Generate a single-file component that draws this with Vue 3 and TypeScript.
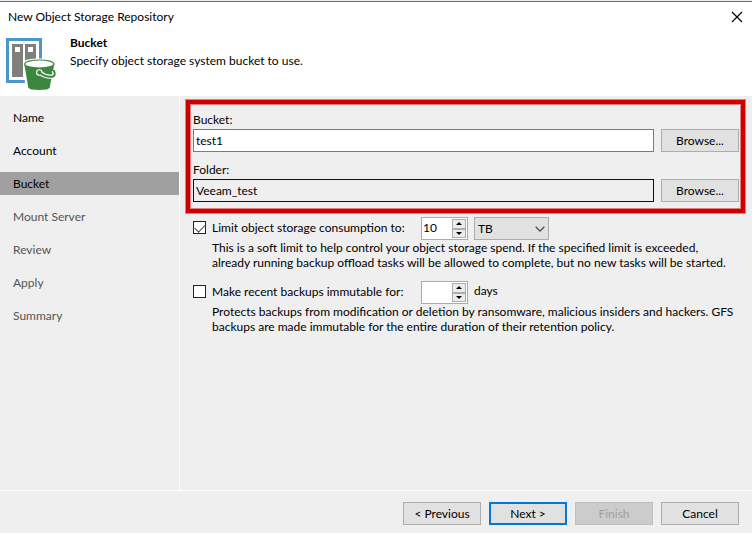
<script setup lang="ts">
import { ref } from 'vue'

interface Step {
  name: string
  state: 'done' | 'current' | 'pending'
}

const steps: Step[] = [
  { name: 'Name', state: 'done' },
  { name: 'Account', state: 'done' },
  { name: 'Bucket', state: 'current' },
  { name: 'Mount Server', state: 'pending' },
  { name: 'Review', state: 'pending' },
  { name: 'Apply', state: 'pending' },
  { name: 'Summary', state: 'pending' },
]

const bucket = ref('test1')
const folder = ref('Veeam_test')
const limitEnabled = ref(true)
const limit = ref('10')
const unit = ref('TB')
const immutable = ref(false)
const days = ref('')

function bump(value: string, delta: number): string {
  return String(Math.max(1, (Number(value) || 0) + delta))
}
</script>

<template>
  <div class="dialog">
    <header class="titlebar">
      <span>New Object Storage Repository</span>
      <button class="close" type="button" aria-label="Close">
        <svg width="12" height="12" viewBox="0 0 12 12">
          <path d="M1 1 11 11M11 1 1 11" stroke="#000" stroke-width="1.2" fill="none" />
        </svg>
      </button>
    </header>

    <div class="banner">
      <svg class="logo" width="50" height="54" viewBox="0 0 50 54" aria-hidden="true">
        <rect x="1.5" y="2.5" width="33" height="42" fill="#fff" stroke="#4a98c9" stroke-width="3" />
        <rect x="6" y="7" width="11" height="33" fill="#7f7f7f" />
        <rect x="19" y="7" width="11" height="33" fill="#7f7f7f" />
        <rect x="9" y="10" width="5" height="5" fill="#fff" />
        <rect x="22" y="10" width="5" height="5" fill="#fff" />
        <path
          d="M17 27C17 22 25 21.500 33 21.500S50 22 50 27V40H47L45 54H20.500L19 46Z"
          fill="#fff"
        />
        <path d="M18.300 27 22.300 50.500Q23 53 33 53T43.700 50.500L48.300 27Z" fill="#3c873e" />
        <ellipse cx="33.300" cy="27" rx="14.600" ry="4" fill="#fff" stroke="#3c873e" stroke-width="1.200" />
        <path d="M34 36Q40 40.500 47 39.500Q50 38 47.500 33.500" fill="none" stroke="#fff" stroke-width="4.200" />
        <circle cx="33.300" cy="35.500" r="2.700" fill="#3c873e" stroke="#fff" stroke-width="1.100" />
        <path d="M34 36Q40 40.500 47 39.500Q50.200 38 47.500 33" fill="none" stroke="#3c873e" stroke-width="2" />
      </svg>
      <div>
        <h1>Bucket</h1>
        <p>Specify object storage system bucket to use.</p>
      </div>
    </div>

    <div class="body">
      <nav class="steps">
        <ol>
          <li v-for="step in steps" :key="step.name" :class="step.state">{{ step.name }}</li>
        </ol>
      </nav>

      <main>
        <section class="highlight">
          <div class="field">
            <label for="bucket">Bucket:</label>
            <input id="bucket" v-model="bucket" type="text" />
            <button type="button" class="btn">Browse...</button>
          </div>
          <div class="field">
            <label for="folder">Folder:</label>
            <input id="folder" v-model="folder" class="locked" type="text" readonly />
            <button type="button" class="btn">Browse...</button>
          </div>
        </section>

        <section class="option">
          <div class="option-row">
            <label class="check">
              <input v-model="limitEnabled" type="checkbox" />
              <span>Limit object storage consumption to:</span>
            </label>
            <div class="spin">
              <input v-model="limit" type="text" aria-label="Storage limit" />
              <div class="arrows">
                <button type="button" aria-label="Increase limit" @click="limit = bump(limit, 1)">
                  <svg width="6" height="3" viewBox="0 0 6 3"><path d="M3 0 6 3H0Z" /></svg>
                </button>
                <button type="button" aria-label="Decrease limit" @click="limit = bump(limit, -1)">
                  <svg width="6" height="3" viewBox="0 0 6 3"><path d="M0 0H6L3 3Z" /></svg>
                </button>
              </div>
            </div>
            <div class="combo">
              <select v-model="unit" aria-label="Limit unit">
                <option>TB</option>
                <option>PB</option>
              </select>
              <svg width="10" height="6" viewBox="0 0 10 6" aria-hidden="true">
                <path d="M.7.7 5 5 9.300.7" fill="none" stroke="#505050" stroke-width="1.300" />
              </svg>
            </div>
          </div>
          <p>
            This is a soft limit to help control your object storage spend. If the specified limit is exceeded,
            already running backup offload tasks will be allowed to complete, but no new tasks will be started.
          </p>
        </section>

        <section class="option">
          <div class="option-row">
            <label class="check">
              <input v-model="immutable" type="checkbox" />
              <span>Make recent backups immutable for:</span>
            </label>
            <div class="spin">
              <input id="days" v-model="days" type="text" />
              <div class="arrows">
                <button type="button" aria-label="Increase days" @click="days = bump(days, 1)">
                  <svg width="6" height="3" viewBox="0 0 6 3"><path d="M3 0 6 3H0Z" /></svg>
                </button>
                <button type="button" aria-label="Decrease days" @click="days = bump(days, -1)">
                  <svg width="6" height="3" viewBox="0 0 6 3"><path d="M0 0H6L3 3Z" /></svg>
                </button>
              </div>
            </div>
            <label for="days">days</label>
          </div>
          <p>
            Protects backups from modification or deletion by ransomware, malicious insiders and hackers. GFS
            backups are made immutable for the entire duration of their retention policy.
          </p>
        </section>
      </main>
    </div>

    <footer>
      <button type="button" class="btn">&lt; Previous</button>
      <button type="button" class="btn primary">Next &gt;</button>
      <button type="button" class="btn" disabled>Finish</button>
      <button type="button" class="btn">Cancel</button>
    </footer>
  </div>
</template>

<style>
body {
  background: #efefef;
}
</style>

<style scoped>
* {
  box-sizing: border-box;
}

.dialog {
  display: flex;
  flex-direction: column;
  min-height: 100vh;
  padding-top: 1px;
  background: #efefef;
  color: #000;
  font-family: Lato, "Noto Sans", sans-serif;
  font-size: 12px;
  line-height: 15px;
}

button,
input,
select {
  margin: 0;
  padding: 0;
  color: inherit;
  font: inherit;
  border-radius: 0;
}

h1,
p,
ol {
  margin: 0;
  padding: 0;
}

.titlebar {
  display: flex;
  align-items: center;
  justify-content: space-between;
  height: 30px;
  padding: 0 7px 0 8px;
  border-top: 1px solid #6b6b6b;
  background: #fff;
}

.close {
  display: flex;
  padding: 2px;
  border: 0;
  background: none;
}

.banner {
  display: flex;
  gap: 14px;
  height: 65px;
  padding: 3px 6px 0;
  background: #fff;
}

.logo {
  margin-top: 3px;
}

.banner h1 {
  font-size: 12px;
  line-height: 18px;
}

.banner p {
  line-height: 18px;
}

.body {
  display: flex;
  flex: 1;
}

.steps {
  flex: none;
  width: 180px;
  border-right: 1px solid #fff;
}

.steps ol {
  display: flex;
  flex-direction: column;
  gap: 10px;
  padding-top: 10px;
  list-style: none;
}

.steps li {
  padding: 0 13px;
  line-height: 23px;
}

.steps .current {
  background: #a0a0a0;
}

.steps .pending {
  color: #555;
}

main {
  flex: 1;
  min-width: 0;
  padding: 4px 7px 0 6px;
}

.highlight {
  display: grid;
  gap: 9px;
  padding: 7px 2px 7px 3px;
  border: 4px solid #d00000;
  box-shadow: 0 0 0 1px #e08080, inset 0 0 0 1px #e08080;
}

.field {
  display: grid;
  grid-template-columns: 1fr 78px;
  column-gap: 7px;
}

.field label {
  grid-column: 1 / -1;
  line-height: 18px;
}

.field input {
  width: 100%;
  height: 23px;
  padding: 0 2px;
  border: 1px solid #7a7a7a;
  background: #fff;
  outline: 0;
}

.field .locked {
  border-color: #111;
  background: #efefef;
}

.btn {
  width: 78px;
  height: 23px;
  border: 1px solid #adadad;
  background: #e1e1e1;
}

.btn.primary {
  border: 2px solid #0078d7;
}

.btn:disabled {
  border-color: #bfbfbf;
  background: #ccc;
  color: #a0a0a0;
}

.option {
  padding: 4px 0 11px 7px;
}

.option + .option {
  padding-top: 0;
}

.option-row {
  display: flex;
  gap: 6px;
  height: 23px;
}

.option-row > label {
  line-height: 20px;
}

.check {
  display: flex;
  align-items: center;
  gap: 6px;
  width: 222px;
  height: 21px;
  white-space: nowrap;
}

.check input {
  flex: none;
  width: 13px;
  height: 13px;
  border: 1px solid #222;
  background: #fff;
  appearance: none;
}

.check input:checked {
  display: grid;
  place-items: center;
}

.check input:checked::before {
  content: "";
  width: 9px;
  height: 5px;
  border: solid #444;
  border-width: 0 0 1px 1px;
  transform: translateY(-1px) rotate(-45deg);
}

.spin {
  display: flex;
  width: 47px;
  padding: 1px;
  border: 1px solid #ababab;
  background: #fff;
}

.spin > input {
  flex: 1;
  min-width: 0;
  height: 16px;
  border: 0;
  background: none;
  outline: 0;
}

.arrows {
  display: flex;
  flex-direction: column;
  width: 14px;
}

.arrows button {
  display: flex;
  flex: 1;
  align-items: center;
  justify-content: center;
  border: 1px solid #adadad;
  background: #ececec;
}

.combo {
  display: grid;
  align-items: center;
  width: 75px;
}

.combo select,
.combo svg {
  grid-area: 1 / 1;
}

.combo select {
  width: 100%;
  height: 23px;
  padding: 0 3px;
  border: 1px solid #adadad;
  background: #e1e1e1;
  appearance: none;
}

.combo svg {
  justify-self: end;
  margin-right: 4px;
  pointer-events: none;
}

.option p {
  padding: 0 7px 0 19px;
}

footer {
  display: flex;
  justify-content: flex-end;
  gap: 8px;
  padding: 11px 13px 8px;
  border-top: 1px solid #fff;
}
</style>
